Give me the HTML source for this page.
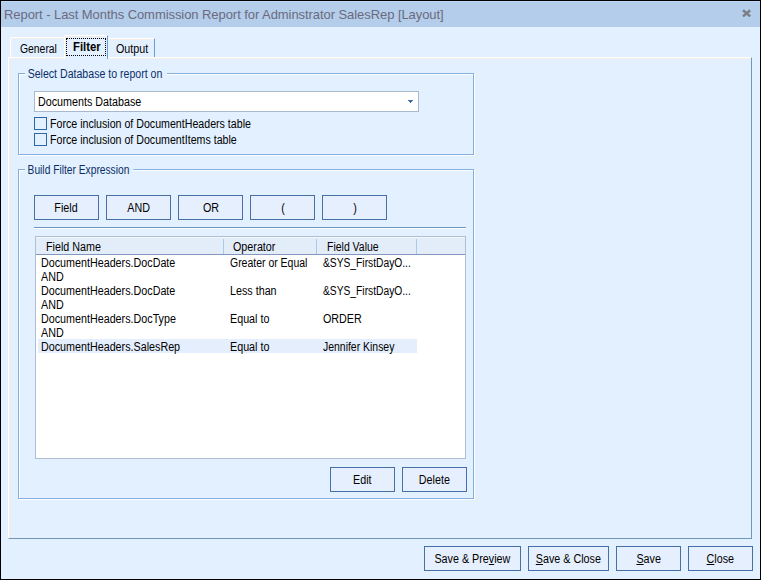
<!DOCTYPE html>
<html><head><meta charset="utf-8">
<style>
*{margin:0;padding:0;box-sizing:border-box}
html,body{width:761px;height:580px;overflow:hidden;background:#000}
#win{position:absolute;left:0;top:0;width:761px;height:580px;background:#E3F0FF}
.a{position:absolute}
.t{position:absolute;font-family:"Liberation Sans",sans-serif;font-size:12px;line-height:13px;white-space:nowrap;color:#000;transform:scaleX(0.895);transform-origin:0 0}
#title{position:absolute;left:1px;top:1px;width:759px;height:26px;background:#B3CDEA;border-top:1px solid #BBD7FA}
#title .tt{position:absolute;left:3px;top:5px;font-family:"Liberation Sans",sans-serif;font-size:13px;line-height:15px;color:#6C6A7E;white-space:nowrap;letter-spacing:-0.065px}
.gb{position:absolute;border:1px solid #84AEDD;box-shadow:inset 1px 1px 0 #fff,1px 1px 0 #fff}
.gl{color:#0A2F68;background:#E3F0FF;padding:0 5px 0 3px}
.btn{position:absolute;border:1px solid #4670A3;background:#E6EFFD;height:25px;font-family:"Liberation Sans",sans-serif;font-size:12px;line-height:25px;text-align:center;white-space:nowrap}
.btn span{display:inline-block;transform:scaleX(0.895)}
.cb{position:absolute;width:13px;height:13px;border:1px solid #2A68AA;background:#E3F0FF}
.row{position:absolute;height:14px}
u{text-decoration:underline;text-underline-offset:1px}
</style></head><body>
<div id="win">
  <div id="title"><div class="tt">Report - Last Months Commission Report for Adminstrator SalesRep [Layout]</div>
    <svg class="a" style="left:740px;top:6px" width="12" height="12" viewBox="0 0 12 12"><path d="M2.0 2.2 L9.2 8.4 M9.2 2.2 L2.0 8.4" stroke="#7B7E87" stroke-width="2.5" fill="none"/></svg>
  </div>

  <!-- tab page -->
  <div class="a" style="left:8px;top:57px;width:744px;height:482px;border-left:1px solid #fff;border-top:1px solid #fff;border-right:1px solid #7096B8;border-bottom:1px solid #7096B8;box-shadow:inset 1px 1px 0 #F3EFE6"></div>

  <!-- tabs -->
  <div class="a" style="left:10px;top:37px;width:54px;height:20px;border-left:1px solid #fff;border-top:1px solid #fff;border-top-left-radius:2px;box-shadow:inset 1px 1px 0 #F3EFE6"></div>
  <div class="t" style="left:20px;top:43px;transform:scaleX(0.865)">General</div>
  <div class="a" style="left:64px;top:35px;width:44px;height:24px;border-left:1px solid #fff;border-top:1px solid #fff;border-right:1px solid #6F9AD2;border-top-left-radius:2px;background:#E3F0FF;box-shadow:inset 1px 1px 0 #F3EFE6"></div>
  <div class="a" style="left:66px;top:38px;width:40px;height:18px;border:1px dotted #000"></div>
  <div class="t" style="left:73px;top:41px;font-weight:bold;transform:scaleX(0.94)">Filter</div>
  <div class="a" style="left:108px;top:38px;width:47px;height:19px;border-top:1px solid #fff;border-right:1px solid #6F9AD2;box-shadow:inset 0 1px 0 #F3EFE6"></div>
  <div class="t" style="left:116px;top:43px">Output</div>

  <!-- groupbox 1 -->
  <div class="gb" style="left:18px;top:73px;width:456px;height:82px"></div>
  <div class="t gl" style="left:25px;top:68px;transform:scaleX(0.882)">Select Database to report on</div>
  <div class="a" style="left:34px;top:91px;width:385px;height:21px;border:1px solid #A7B8CF;background:#fff"></div>
  <div class="t" style="left:38px;top:96px">Documents Database</div>
  <svg class="a" style="left:408px;top:100px" width="5" height="3" shape-rendering="crispEdges"><rect x="0" y="0" width="5" height="1" fill="#3F6FAD"/><rect x="1" y="1" width="3" height="1" fill="#3F6FAD"/><rect x="2" y="2" width="1" height="1" fill="#3F6FAD"/></svg>
  <div class="cb" style="left:34px;top:117px"></div>
  <div class="t" style="left:50px;top:118px;transform:scaleX(0.886)">Force inclusion of DocumentHeaders table</div>
  <div class="cb" style="left:34px;top:133px"></div>
  <div class="t" style="left:50px;top:134px;transform:scaleX(0.886)">Force inclusion of DocumentItems table</div>

  <!-- groupbox 2 -->
  <div class="gb" style="left:18px;top:169px;width:456px;height:330px"></div>
  <div class="t gl" style="left:25px;top:164px;transform:scaleX(0.853)">Build Filter Expression</div>
  <div class="btn" style="left:34px;top:195px;width:65px"><span>Field</span></div>
  <div class="btn" style="left:106px;top:195px;width:65px"><span>AND</span></div>
  <div class="btn" style="left:178px;top:195px;width:65px"><span>OR</span></div>
  <div class="btn" style="left:250px;top:195px;width:65px"><span>(</span></div>
  <div class="btn" style="left:322px;top:195px;width:65px"><span>)</span></div>
  <div class="a" style="left:34px;top:227px;width:432px;height:2px;border-top:1px solid #7295BC;border-bottom:1px solid #fff"></div>

  <!-- listview -->
  <div class="a" style="left:35px;top:236px;width:431px;height:223px;border:1px solid #AEBED3;background:#fff"></div>
  <div class="a" style="left:36px;top:237px;width:429px;height:18px;background:#E3EDFA;border-bottom:1px solid #8098BC;box-shadow:inset 0 1px 0 #F2F7FD"></div>
  <div class="a" style="left:223px;top:239px;width:1px;height:15px;background:#A9CAEE"></div>
  <div class="a" style="left:316px;top:239px;width:1px;height:15px;background:#A9CAEE"></div>
  <div class="a" style="left:416px;top:239px;width:1px;height:15px;background:#A9CAEE"></div>
  <div class="t" style="left:46px;top:241px">Field Name</div>
  <div class="t" style="left:233px;top:241px">Operator</div>
  <div class="t" style="left:327px;top:241px;transform:scaleX(0.873)">Field Value</div>
  <div class="a" style="left:38px;top:339px;width:379px;height:14px;background:#E4EEFC"></div>
  <div class="t" style="left:41px;top:257px">DocumentHeaders.DocDate</div>
  <div class="t" style="left:230px;top:257px;transform:scaleX(0.872)">Greater or Equal</div>
  <div class="t" style="left:323px;top:257px;transform:scaleX(0.855)">&amp;SYS_FirstDayO...</div>
  <div class="t" style="left:41px;top:271px">AND</div>
  <div class="t" style="left:41px;top:285px">DocumentHeaders.DocDate</div>
  <div class="t" style="left:230px;top:285px">Less than</div>
  <div class="t" style="left:323px;top:285px;transform:scaleX(0.855)">&amp;SYS_FirstDayO...</div>
  <div class="t" style="left:41px;top:299px">AND</div>
  <div class="t" style="left:41px;top:313px">DocumentHeaders.DocType</div>
  <div class="t" style="left:230px;top:313px">Equal to</div>
  <div class="t" style="left:323px;top:313px">ORDER</div>
  <div class="t" style="left:41px;top:327px">AND</div>
  <div class="t" style="left:41px;top:341px">DocumentHeaders.SalesRep</div>
  <div class="t" style="left:230px;top:341px">Equal to</div>
  <div class="t" style="left:323px;top:341px;transform:scaleX(0.87)">Jennifer Kinsey</div>

  <div class="btn" style="left:330px;top:467px;width:65px"><span>Edit</span></div>
  <div class="btn" style="left:402px;top:467px;width:65px"><span>Delete</span></div>

  <!-- bottom buttons -->
  <div class="btn" style="left:424px;top:546px;width:97px"><span>Save &amp; Pre<u>v</u>iew</span></div>
  <div class="btn" style="left:528px;top:546px;width:81px"><span><u>S</u>ave &amp; Close</span></div>
  <div class="btn" style="left:616px;top:546px;width:65px"><span><u>S</u>ave</span></div>
  <div class="btn" style="left:688px;top:546px;width:65px"><span><u>C</u>lose</span></div>
  <div class="a" style="left:0;top:0;width:761px;height:580px;border:1px solid #000"></div>
</div>
</body></html>
